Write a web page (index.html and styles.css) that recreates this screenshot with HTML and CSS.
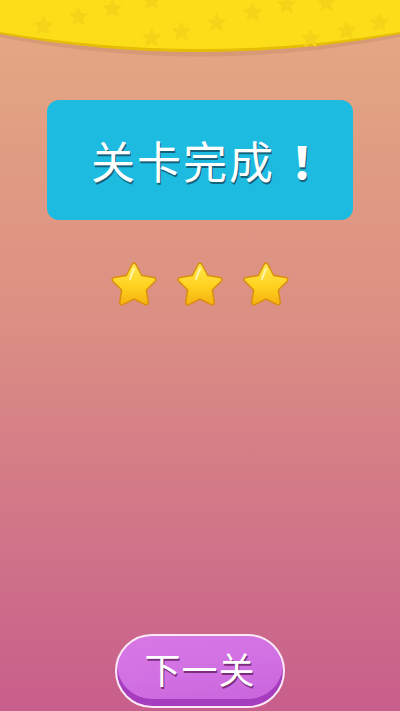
FILE: index.html
```html
<!DOCTYPE html>
<html lang="zh">

<head>
    <meta charset="UTF-8">
    <meta name="viewport" content="width=device-width, initial-scale=1.0">
    <title>关卡完成</title>
    <link rel="stylesheet" href="styles.css">
</head>

<body>
    <div class="screen">
        <!-- верхняя жёлтая шапка со звёздочками -->
        <svg class="top-banner" viewBox="0 0 400 62" width="400" height="62">
            <defs>
                <symbol id="bgStar" viewBox="-10 -10 20 20">
                    <polygon points="0,-9 2.6,-3 9,-2.8 4,1.6 5.6,8 0,4.4 -5.6,8 -4,1.6 -9,-2.8 -2.6,-3"
                        stroke-linejoin="round" stroke-width="1.5" />
                </symbol>
            </defs>
            <path d="M0 33 Q200 70 400 33 V37 Q200 76 0 37 Z" fill="#c98e6c" opacity="0.5" />
            <path d="M0 0 H400 V34 Q200 70 0 34 Z" fill="#e6bc06" />
            <path d="M0 0 H400 V32 Q200 66 0 32 Z" fill="#fcdd1a" />
            <g fill="#f3d418" stroke="#f3d418">
                <use href="#bgStar" x="34" y="16" width="19" height="19" />
                <use href="#bgStar" x="69" y="7" width="19" height="19" />
                <use href="#bgStar" x="103" y="-1" width="19" height="19" />
                <use href="#bgStar" x="142" y="-9" width="19" height="19" />
                <use href="#bgStar" x="142" y="28" width="19" height="19" />
                <use href="#bgStar" x="172" y="22" width="19" height="19" />
                <use href="#bgStar" x="207" y="13" width="19" height="19" />
                <use href="#bgStar" x="243" y="3" width="19" height="19" />
                <use href="#bgStar" x="277" y="-5" width="19" height="19" />
                <use href="#bgStar" x="301" y="29" width="19" height="19" />
                <use href="#bgStar" x="337" y="21" width="19" height="19" />
                <use href="#bgStar" x="370" y="13" width="19" height="19" />
                <use href="#bgStar" x="317" y="-7" width="19" height="19" />
            </g>
        </svg>

        <div class="result-card">
            <span class="result-title">关卡完成<span class="mark">！</span></span>
        </div>

        <!-- звёзды -->
        <div class="stars">
            <svg class="star" viewBox="0 0 48 48" width="48" height="48">
                <use href="#bigStar" />
            </svg>
            <svg class="star" viewBox="0 0 48 48" width="48" height="48">
                <use href="#bigStar" />
            </svg>
            <svg class="star" viewBox="0 0 48 48" width="48" height="48">
                <use href="#bigStar" />
            </svg>
        </div>

        <svg width="0" height="0" class="defs">
            <defs>
                <linearGradient id="starFill" x1="0" y1="0" x2="0" y2="1">
                    <stop offset="0" stop-color="#ffe44c" />
                    <stop offset="0.55" stop-color="#ffd21f" />
                    <stop offset="1" stop-color="#f6b512" />
                </linearGradient>
                <symbol id="bigStar" viewBox="0 0 48 48">
                    <polygon points="24,4.5 30.17,16.51 43.5,18.67 33.99,28.24 36.05,41.58 24,35.5 11.95,41.58 14.01,28.24 4.5,18.67 17.83,16.51"
                        fill="#d98e0c" stroke="#d98e0c" stroke-width="6" stroke-linejoin="round" />
                    <polygon points="24,4.5 30.17,16.51 43.5,18.67 33.99,28.24 36.05,41.58 24,35.5 11.95,41.58 14.01,28.24 4.5,18.67 17.83,16.51"
                        fill="url(#starFill)" stroke="url(#starFill)" stroke-width="3" stroke-linejoin="round" />
                    <path d="M20 18 Q22.5 11 24 8" stroke="#fff7b8" stroke-width="2.2" stroke-linecap="round" fill="none" opacity="0.85" />
                </symbol>
            </defs>
        </svg>

        <div class="spacer"></div>

        <button class="next-button">
            <span class="next-label">下一关</span>
        </button>
    </div>
</body>

</html>
```

FILE: styles.css
```css
/* Общие стили */
body {
    margin: 0;
    font-family: "Noto Sans CJK SC", "Noto Sans", sans-serif;
}

.screen {
    width: 400px;
    height: 711px;
    display: flex;
    flex-direction: column;
    align-items: center;
    overflow: hidden;
    background: linear-gradient(180deg, #e5a982 0%, #dc8f84 45%, #c85e8c 100%);
}

.top-banner {
    display: block;
    flex-shrink: 0;
}

/* Карточка с заголовком */
.result-card {
    width: 306px;
    height: 120px;
    margin-top: 38px;
    border-radius: 12px;
    background-color: #1ebbe0;
    display: flex;
    align-items: center;
    justify-content: center;
}

.result-title {
    color: #fff;
    font-size: 44px;
    font-weight: 400;
    letter-spacing: 2px;
    text-shadow: 1px 2px 0 #15627c;
    padding-left: 28px;
}

.mark {
    margin-left: 16px;
    font-weight: 900;
}

/* Звёзды */
.stars {
    display: flex;
    gap: 18px;
    margin-top: 41px;
}

.star {
    display: block;
}

.defs {
    position: absolute;
}

.spacer {
    flex: 1;
}

/* Кнопка «Следующий уровень» */
.next-button {
    width: 170px;
    height: 74px;
    margin-bottom: 3px;
    padding: 0 0 6px;
    border: 2px solid #fbe9f6;
    border-radius: 37px;
    background: linear-gradient(170deg, #d878e6 0%, #d170e2 50%, #c962db 100%);
    box-shadow: inset 0 -7px 0 #a63dbf;
    cursor: pointer;
    font-family: inherit;
}

.next-label {
    color: #fff;
    font-size: 36px;
    font-weight: 400;
    letter-spacing: 1px;
    text-shadow: 1px 2px 0 #7d2d7e;
}
```
